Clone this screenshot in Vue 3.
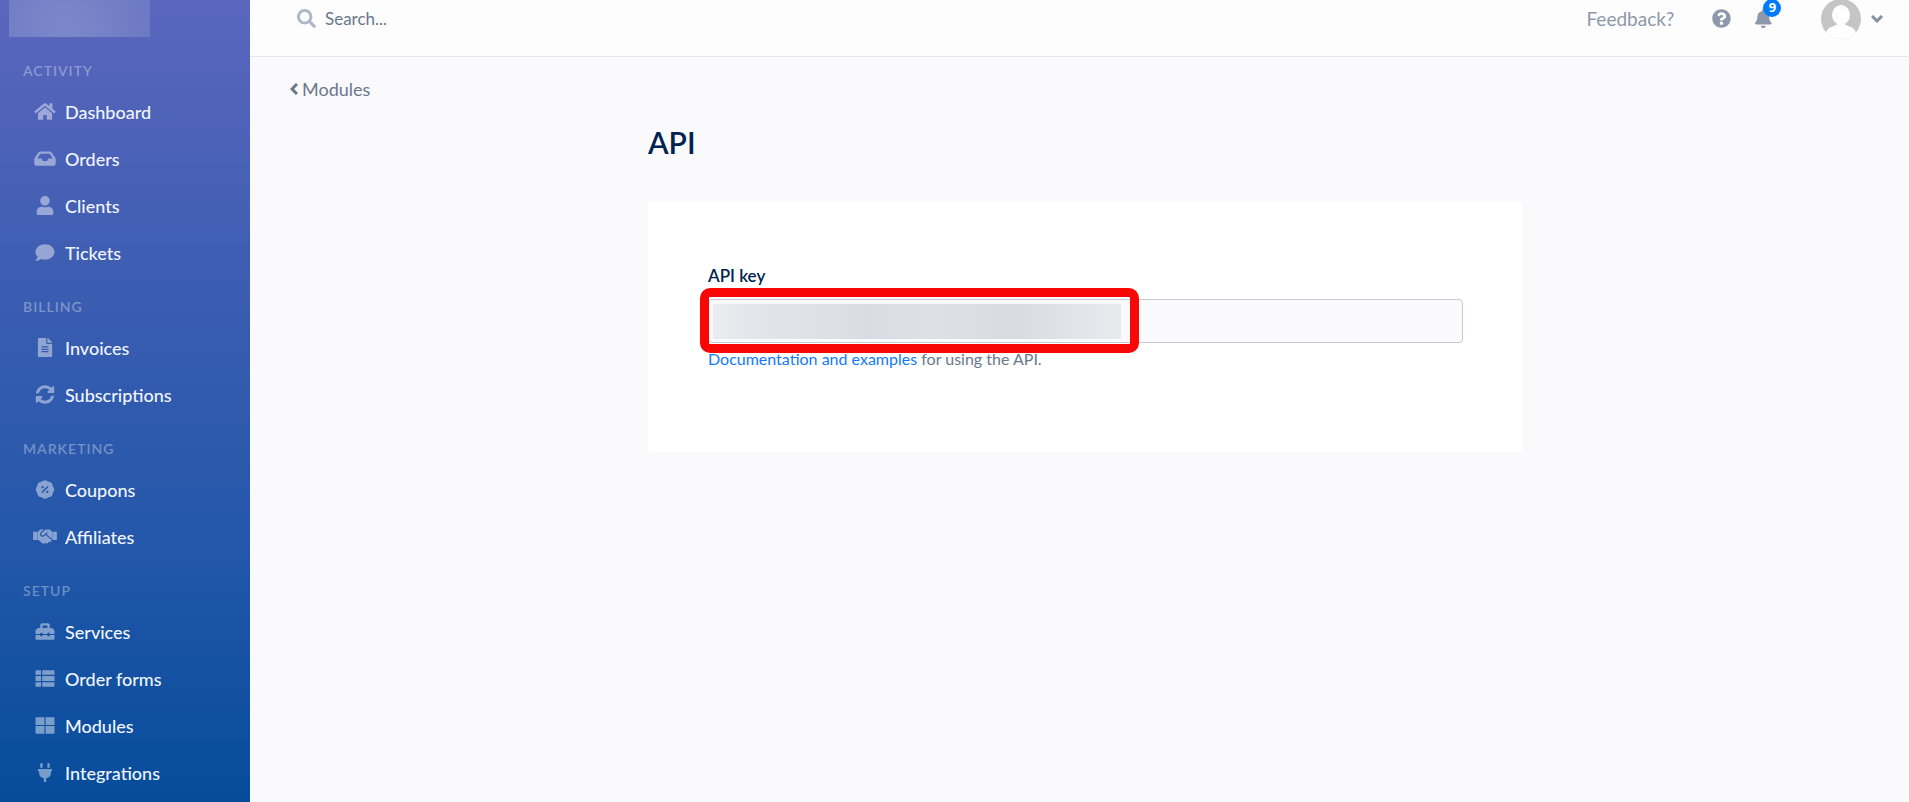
<script setup>
import { ref } from 'vue'

const search = ref('');
const apiKey = ref('');
const unreadCount = ref(9);

const icons = {
  home: {
    box: '0 0 576 512',
    path: 'M280.37 148.26L96 300.11V464a16 16 0 0 0 16 16l112.06-.29a16 16 0 0 0 15.92-16V368a16 16 0 0 1 16-16h64a16 16 0 0 1 16 16v95.64a16 16 0 0 0 16 16.05L464 480a16 16 0 0 0 16-16V300L295.67 148.26a12.19 12.19 0 0 0-15.3 0zM571.6 251.47L488 182.56V44.05a12 12 0 0 0-12-12h-56a12 12 0 0 0-12 12v72.61L318.47 43a48 48 0 0 0-61 0L4.34 251.47a12 12 0 0 0-1.6 16.9l25.5 31A12 12 0 0 0 45.15 301l235.22-193.74a12.19 12.19 0 0 1 15.3 0L530.9 301a12 12 0 0 0 16.9-1.6l25.5-31a12 12 0 0 0-1.7-16.93z'
  },
  inbox: {
    box: '0 0 576 512',
    path: 'M567.938 243.908L462.25 85.374A48.003 48.003 0 0 0 422.311 64H153.689a48 48 0 0 0-39.938 21.374L8.062 243.908A47.994 47.994 0 0 0 0 270.533V400c0 26.51 21.49 48 48 48h480c26.51 0 48-21.49 48-48V270.533a47.994 47.994 0 0 0-8.062-26.625zM162.252 128h251.497l85.333 128H376l-32 64H232l-32-64H76.918l85.334-128z'
  },
  user: {
    box: '0 0 448 512',
    path: 'M224 256c70.7 0 128-57.3 128-128S294.7 0 224 0 96 57.3 96 128s57.3 128 128 128zm89.6 32h-16.7c-22.2 10.2-46.9 16-72.9 16s-50.6-5.8-72.9-16h-16.7C60.2 288 0 348.2 0 422.4V464c0 26.5 21.5 48 48 48h352c26.5 0 48-21.5 48-48v-41.6c0-74.2-60.2-134.4-134.4-134.4z'
  },
  comment: {
    box: '0 0 512 512',
    path: 'M256 32C114.6 32 0 125.1 0 240c0 49.6 21.4 95 57 130.7C44.5 421.1 2.7 466 2.2 466.5c-2.2 2.3-2.8 5.7-1.5 8.7S4.8 480 8 480c66.3 0 116-31.8 140.6-51.4 32.7 12.3 69 19.4 107.4 19.4 141.4 0 256-93.1 256-208S397.4 32 256 32z'
  },
  file: {
    box: '0 0 384 512',
    path: 'M224 136V0H24C10.7 0 0 10.7 0 24v464c0 13.3 10.7 24 24 24h336c13.3 0 24-10.7 24-24V160H248c-13.2 0-24-10.8-24-24zm64 236c0 6.6-5.4 12-12 12H108c-6.6 0-12-5.4-12-12v-8c0-6.6 5.4-12 12-12h168c6.6 0 12 5.4 12 12v8zm0-64c0 6.6-5.4 12-12 12H108c-6.6 0-12-5.4-12-12v-8c0-6.6 5.4-12 12-12h168c6.6 0 12 5.4 12 12v8zm0-72v8c0 6.6-5.4 12-12 12H108c-6.6 0-12-5.4-12-12v-8c0-6.6 5.4-12 12-12h168c6.6 0 12 5.4 12 12zm96-114.1v6.1H256V0h6.1c6.4 0 12.5 2.5 17 7l97.9 98c4.5 4.5 7 10.6 7 16.9z'
  },
  sync: {
    box: '0 0 512 512',
    path: 'M370.72 133.28C339.458 104.008 298.888 87.962 255.848 88c-77.458.068-144.328 53.178-162.791 126.85-1.344 5.363-6.122 9.15-11.651 9.15H24.103c-7.498 0-13.194-6.807-11.807-14.176C33.933 94.924 134.813 8 256 8c66.448 0 126.791 26.136 171.315 68.685L463.03 40.97C478.149 25.851 504 36.559 504 57.941V192c0 13.255-10.745 24-24 24H345.941c-21.382 0-32.09-25.851-16.971-40.971l41.75-41.749zM32 296h134.059c21.382 0 32.09 25.851 16.971 40.971l-41.75 41.75c31.262 29.273 71.835 45.319 114.876 45.28 77.418-.07 144.315-53.144 162.787-126.849 1.344-5.363 6.122-9.15 11.651-9.15h57.304c7.498 0 13.194 6.807 11.807 14.176C478.067 417.076 377.187 504 256 504c-66.448 0-126.791-26.136-171.315-68.685L48.97 471.03C33.851 486.149 8 475.441 8 454.059V320c0-13.255 10.745-24 24-24z'
  },
  badge: {
    box: '0 0 512 512',
    path: 'M170 48A110 110 0 0 1 342 48A110 110 0 0 1 464 170A110 110 0 0 1 464 342A110 110 0 0 1 342 464A110 110 0 0 1 170 464A110 110 0 0 1 48 342A110 110 0 0 1 48 170A110 110 0 0 1 170 48zM160 192a32 32 0 0 0 64 0a32 32 0 0 0-64 0zM288 320a32 32 0 0 0 64 0a32 32 0 0 0-64 0zM322 160l30 30-162 162-30-30z'
  },
  handshake: {
    box: '0 0 640 512',
    path: 'M434.7 64h-85.900c-8 0-15.700 3-21.600 8.400l-98.300 90c-.1.1-.2.3-.3.4-16.600 15.600-16.300 40.500-2.100 56 12.700 13.900 39.400 17.600 56.100 2.700.1-.1.3-.1.4-.2l79.900-73.200c6.500-5.900 16.700-5.500 22.600 1 6 6.500 5.500 16.600-1 22.600l-26.100 23.900L504 313.800c2.900 2.400 5.500 5 7.900 7.700V128l-54.600-54.600c-5.900-6-14.100-9.400-22.600-9.400zM520 128h120v224H520zM0 128h120v224H0zm483.900 210.700L334.600 217.500l-30 27.500c-29.700 27.100-75.200 24.500-101.700-4.400-26.900-29.400-24.800-74.900 4.400-101.700L289.100 64h-83.800c-8.500 0-16.600 3.400-22.600 9.400L128 128v223.900h18.300l90.500 81.900c27.400 22.300 67.700 18.100 90-9.300l.2-.2 17.900 15.500c15.900 13 39.400 10.500 52.300-5.400l31.400-38.600 5.400 4.400c13.700 11.100 33.900 9.100 45-4.700l9.500-11.700c11.200-13.800 9.100-33.900-4.600-45.100z'
  },
  toolbox: {
    box: '0 0 512 512',
    path: 'M502.63 214.63l-45.25-45.25c-6-6-14.14-9.37-22.63-9.37H384V80c0-26.51-21.49-48-48-48H176c-26.51 0-48 21.49-48 48v80H77.25c-8.49 0-16.62 3.37-22.63 9.37L9.37 214.63c-6 6-9.37 14.14-9.37 22.63V320h128v-16c0-8.84 7.16-16 16-16h32c8.84 0 16 7.16 16 16v16h128v-16c0-8.84 7.16-16 16-16h32c8.84 0 16 7.16 16 16v16h128v-82.75c0-8.48-3.37-16.62-9.37-22.62zM320 160H192V96h128v64zm64 208c0 8.84-7.16 16-16 16h-32c-8.84 0-16-7.16-16-16v-16H192v16c0 8.84-7.16 16-16 16h-32c-8.84 0-16-7.16-16-16v-16H0v96c0 17.67 14.33 32 32 32h448c17.67 0 32-14.33 32-32v-96H384v16z'
  },
  list: {
    box: '0 0 512 512',
    path: 'M24 32h125v125H0V56a24 24 0 0 1 24-24zM181 32h307a24 24 0 0 1 24 24v101H181zM0 189h149v134H0zM181 189h331v134H181zM0 355h149v125H24a24 24 0 0 1-24-24zM181 355h331v101a24 24 0 0 1-24 24H181z'
  },
  grid: {
    box: '0 0 512 512',
    path: 'M24 32h217v209H0V56a24 24 0 0 1 24-24zM271 32h217a24 24 0 0 1 24 24v185H271zM0 271h241v209H24a24 24 0 0 1-24-24zM271 271h241v185a24 24 0 0 1-24 24H271z'
  },
  plug: {
    box: '0 0 384 512',
    path: 'M320 32a32 32 0 0 0-64 0v96h64zm48 128H16A16 16 0 0 0 0 176v32a16 16 0 0 0 16 16h16v32a160.07 160.07 0 0 0 128 156.8V512h64v-99.2A160.07 160.07 0 0 0 352 256v-32h16a16 16 0 0 0 16-16v-32a16 16 0 0 0-16-16zM128 32a32 32 0 0 0-64 0v96h64z'
  }
}

const navGroups = [
  {
    title: 'Activity',
    items: [
      { label: 'Dashboard', icon: 'home' },
      { label: 'Orders', icon: 'inbox' },
      { label: 'Clients', icon: 'user' },
      { label: 'Tickets', icon: 'comment' },
    ]
  },
  {
    title: 'Billing',
    items: [
      { label: 'Invoices', icon: 'file' },
      { label: 'Subscriptions', icon: 'sync' },
    ]
  },
  {
    title: 'Marketing',
    items: [
      { label: 'Coupons', icon: 'badge' },
      { label: 'Affiliates', icon: 'handshake' },
    ]
  },
  {
    title: 'Setup',
    items: [
      { label: 'Services', icon: 'toolbox' },
      { label: 'Order forms', icon: 'list' },
      { label: 'Modules', icon: 'grid' },
      { label: 'Integrations', icon: 'plug' },
    ]
  },
]
</script>

<template>
  <div class="layout">
    <aside class="sidebar">
      <div class="logo"></div>
      <nav>
        <section v-for="group in navGroups" :key="group.title" class="nav-group">
          <h2 class="nav-title">{{ group.title }}</h2>
          <a v-for="item in group.items" :key="item.label" href="#" class="nav-link">
            <svg class="nav-icon" :viewBox="icons[item.icon].box" aria-hidden="true">
              <path fill-rule="evenodd" :d="icons[item.icon].path" />
            </svg>
            <span>{{ item.label }}</span>
          </a>
        </section>
      </nav>
    </aside>

    <div class="page">
      <header class="topbar">
        <label class="search">
          <svg class="search-icon" viewBox="0 0 512 512" aria-hidden="true">
            <path d="M505 442.7L405.3 343c-4.5-4.5-10.6-7-17-7H372c27.6-35.3 44-79.7 44-128C416 93.1 322.9 0 208 0S0 93.1 0 208s93.1 208 208 208c48.3 0 92.7-16.4 128-44v16.3c0 6.4 2.5 12.5 7 17l99.7 99.7c9.4 9.4 24.6 9.4 33.9 0l28.3-28.3c9.4-9.4 9.4-24.6.1-34zM208 336c-70.7 0-128-57.2-128-128 0-70.7 57.2-128 128-128 70.7 0 128 57.2 128 128 0 70.7-57.2 128-128 128z" />
          </svg>
          <input v-model="search" type="text" placeholder="Search..." aria-label="Search" />
        </label>

        <a href="#" class="feedback">Feedback?</a>
        <button type="button" class="icon-button help-button" aria-label="Help">
          <svg viewBox="0 0 512 512" aria-hidden="true">
            <path d="M504 256c0 136.997-111.043 248-248 248S8 392.997 8 256C8 119.083 119.043 8 256 8s248 111.083 248 248zM262.655 90c-54.497 0-89.255 22.957-116.549 63.758-3.536 5.286-2.353 12.415 2.715 16.258l34.699 26.31c5.205 3.947 12.621 3.008 16.665-2.122 17.864-22.658 30.113-35.797 57.303-35.797 20.429 0 45.698 13.148 45.698 32.958 0 14.976-12.363 22.667-32.534 33.976C247.128 238.528 216 254.941 216 296v4c0 6.627 5.373 12 12 12h56c6.627 0 12-5.373 12-12v-1.333c0-28.462 83.186-29.647 83.186-106.667 0-58.002-60.165-102-116.531-102zM256 338c-25.365 0-46 20.635-46 46 0 25.364 20.635 46 46 46s46-20.636 46-46c0-25.365-20.635-46-46-46z" />
          </svg>
        </button>
        <button type="button" class="icon-button bell-button" aria-label="Notifications">
          <svg viewBox="0 0 448 512" aria-hidden="true">
            <path d="M224 512c35.32 0 63.97-28.65 63.97-64H160.03c0 35.35 28.65 64 63.97 64zm215.39-149.71c-19.32-20.76-55.47-51.99-55.47-154.29 0-77.7-54.48-139.9-127.94-155.16V32c0-17.67-14.32-32-31.98-32s-31.98 14.33-31.98 32v20.84C118.56 68.1 64.08 130.3 64.08 208c0 102.3-36.15 133.53-55.47 154.29-6 6.45-8.66 14.16-8.61 21.71.11 16.4 12.98 32 32.1 32h383.8c19.12 0 32-15.6 32.1-32 .05-7.55-2.61-15.27-8.61-21.71z" />
          </svg>
          <span class="count">{{ unreadCount }}</span>
        </button>
        <button type="button" class="account" aria-label="Account">
          <svg class="avatar" viewBox="0 0 40 40" aria-hidden="true">
            <clipPath id="avatar-clip"><circle cx="20" cy="20" r="20" /></clipPath>
            <g clip-path="url(#avatar-clip)">
              <rect width="40" height="40" fill="#c5c5c5" />
              <ellipse cx="20" cy="16" rx="9" ry="10" fill="#fff" />
              <path d="M16 22h8v3c0 2 10 2 11 9v7H5v-7c1-7 11-7 11-9z" fill="#fff" />
            </g>
          </svg>
          <svg class="caret" viewBox="0 0 12 8" aria-hidden="true">
            <path d="M1 1l5 5 5-5" />
          </svg>
        </button>
      </header>

      <main class="content">
        <a href="#" class="back">
          <svg viewBox="0 0 8 12" aria-hidden="true">
            <path d="M7 1L2 6l5 5" />
          </svg>
          <span>Modules</span>
        </a>

        <div class="container">
          <h1>API</h1>
          <form class="card" @submit.prevent>
            <label for="api-key" class="field-label">API key</label>
            <div class="field">
              <input id="api-key" v-model="apiKey" type="text" readonly />
              <!-- hides the key -->
              <div class="mask"></div>
              <div class="highlight"></div>
            </div>
            <p class="hint"><a href="#">Documentation and examples</a> for using the API.</p>
          </form>
        </div>
      </main>
    </div>
  </div>
</template>

<style>
body {
  margin: 0;
  background: #fafafc;
}
</style>

<style scoped>
.layout {
  display: flex;
  min-height: 100vh;
  font-family: Lato, "Open Sans", sans-serif;
  font-size: 18px;
  color: #69788c;
}

a {
  color: inherit;
  text-decoration: none;
}

button {
  padding: 0;
  border: 0;
  background: none;
  font: inherit;
  color: inherit;
  cursor: pointer;
}

.sidebar {
  flex: 0 0 250px;
  background: linear-gradient(180deg, #5b66bd 0%, #3a5db1 37%, #2457aa 67%, #064c9b 100%);
}

.logo {
  width: 141px;
  height: 37px;
  margin: 0 0 3px 9px;
  background: radial-gradient(circle at 40% 80%, #7a88cb, #7481c6 50%, #6b78c3 100%);
}

.nav-group {
  padding-top: 21px;
}

.nav-title {
  margin: 0 0 7px 23px;
  font-size: 14px;
  line-height: 20px;
  font-weight: 600;
  letter-spacing: 1px;
  text-transform: uppercase;
  color: rgba(255, 255, 255, 0.35);
}

.nav-link {
  display: flex;
  align-items: center;
  gap: 7px;
  height: 47px;
  padding-left: 32px;
  font-weight: 500;
  color: #f0f5fd;
}

.nav-icon {
  width: 26px;
  height: 19px;
  fill: rgba(255, 255, 255, 0.45);
}

.page {
  flex: 1;
  min-width: 0;
}

.topbar {
  display: flex;
  align-items: center;
  height: 37px;
  padding: 0 26px 19px 47px;
  border-bottom: 1px solid #e6e7ee;
  background: #fdfdfd;
}

.search {
  display: flex;
  flex: 1;
  align-items: center;
  gap: 9px;
}

.search-icon {
  width: 19px;
  height: 19px;
  fill: #b0b8c7;
}

.search input {
  flex: 1;
  min-width: 0;
  padding: 0;
  border: 0;
  outline: none;
  background: none;
  font: inherit;
  font-size: 17px;
  color: inherit;
}

.search input::placeholder {
  color: #69788c;
  opacity: 1;
}

.feedback {
  font-size: 19px;
  color: #8d98aa;
}

.icon-button {
  position: relative;
  display: flex;
  color: #8d98aa;
}

.icon-button svg {
  height: 19px;
  fill: currentColor;
}

.help-button {
  margin-left: 38px;
}

.bell-button {
  margin-left: 24px;
}

.count {
  position: absolute;
  top: -10px;
  left: 8px;
  width: 18px;
  height: 18px;
  border-radius: 9px;
  background: #007bff;
  font-family: "Open Sans", sans-serif;
  font-size: 13px;
  line-height: 17px;
  font-weight: 700;
  text-align: center;
  color: #fff;
}

.account {
  display: flex;
  align-items: center;
  gap: 10px;
  margin-left: 49px;
}

.avatar {
  width: 40px;
  height: 40px;
}

.caret,
.back svg {
  fill: none;
  stroke: #8491a5;
  stroke-width: 3;
}

.caret {
  width: 12px;
  height: 8px;
}

.content {
  padding: 19px 28px 40px 40px;
}

.back {
  display: inline-flex;
  align-items: center;
  gap: 4px;
  line-height: 26px;
}

.back svg {
  width: 8px;
  height: 12px;
  stroke: #69788c;
}

.container {
  max-width: 875px;
  margin: 0 auto;
}

h1 {
  margin: 20px 0 40px;
  font-size: 30px;
  line-height: 40px;
  font-weight: 600;
  color: #00234f;
}

.card {
  padding: 60px 60px 81px;
  border-radius: 4px;
  background: #fff;
}

.field-label {
  display: block;
  margin-bottom: 10px;
  font-size: 17px;
  line-height: 27px;
  font-weight: 600;
  color: #00234f;
}

.field {
  position: relative;
}

.field input {
  display: block;
  box-sizing: border-box;
  width: 100%;
  height: 44px;
  padding: 0 12px;
  border: 1px solid #c7cad6;
  border-radius: 4px;
  outline: none;
  background: #fafafc;
  font: inherit;
}

.mask {
  position: absolute;
  top: 5px;
  left: 5px;
  width: 408px;
  height: 35px;
  background: linear-gradient(90deg, #ebecef 0%, #e3e4e9 12%, #e1e2e7 24%, #dadce3 38%, #dfe0e6 54%, #d9dbe1 74%, #e0e1e6 84%, #e9eaee 100%);
}

.highlight {
  position: absolute;
  box-sizing: border-box;
  top: -11px;
  left: -8px;
  width: 439px;
  height: 65px;
  border: 9px solid #f90606;
  border-radius: 10px;
}

.hint {
  margin: 4px 0 0;
  font-size: 16px;
  line-height: 24px;
}

.hint a {
  color: #1478ff;
}
</style>
